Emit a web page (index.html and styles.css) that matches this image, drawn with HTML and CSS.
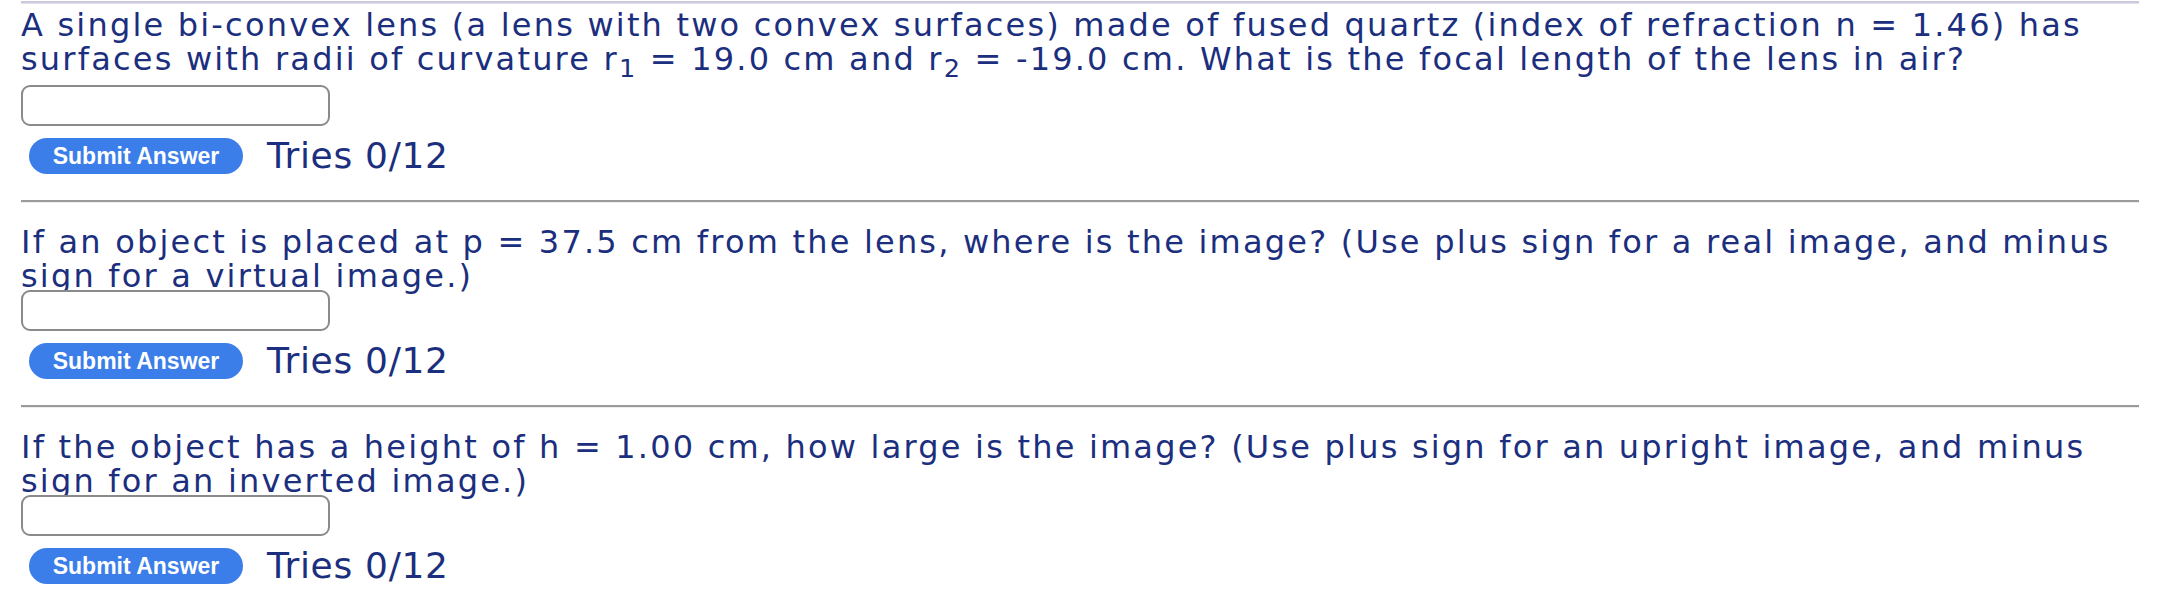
FILE: index.html
```html
<!DOCTYPE html>
<html lang="en">
<head>
<meta charset="utf-8">
<title>Lens questions</title>
<link rel="stylesheet" href="styles.css">
</head>
<body>
<main class="page">
  <section class="part part--first">
    <hr class="rule rule--top">
    <p class="question question--sub">A single bi-convex lens (a lens with two convex surfaces) made of fused quartz (index of refraction n = 1.46) has<br>surfaces with radii of curvature r<sub class="sub">1</sub> = 19.0 cm and r<sub class="sub">2</sub> = -19.0 cm. What is the focal length of the lens in air?</p>
    <input class="answer" type="text" aria-label="Answer">
    <div class="submit-row">
      <button class="submit" type="button">Submit Answer</button>
      <span class="tries">Tries 0/12</span>
    </div>
  </section>
  <section class="part">
    <hr class="rule">
    <p class="question">If an object is placed at p = 37.5 cm from the lens, where is the image? (Use plus sign for a real image, and minus<br>sign for a virtual image.)</p>
    <input class="answer" type="text" aria-label="Answer">
    <div class="submit-row">
      <button class="submit" type="button">Submit Answer</button>
      <span class="tries">Tries 0/12</span>
    </div>
  </section>
  <section class="part">
    <hr class="rule">
    <p class="question">If the object has a height of h = 1.00 cm, how large is the image? (Use plus sign for an upright image, and minus<br>sign for an inverted image.)</p>
    <input class="answer" type="text" aria-label="Answer">
    <div class="submit-row">
      <button class="submit" type="button">Submit Answer</button>
      <span class="tries">Tries 0/12</span>
    </div>
  </section>
</main>
</body>
</html>
```

FILE: styles.css
```css
html, body {
  margin: 0;
  padding: 0;
  background: #ffffff;
}

.page {
  padding: 0 21px;
  font-family: "DejaVu Sans", Verdana, sans-serif;
  color: #1b2f7e;
}

.part {
  display: flex;
  flex-direction: column;
  align-items: flex-start;
  margin-top: 26px;
}

.part--first {
  margin-top: 1px;
}

.rule {
  align-self: stretch;
  height: 0;
  margin: 0;
  border: 0;
  border-top: 2px solid #9b9b9b;
  border-bottom: 1px solid #ececec;
}

.rule--top {
  border-top: 2px solid #cacadc;
  border-bottom: 1px solid #e2e2ec;
}

.question {
  margin: 22px 0 0;
  font-size: 32px;
  line-height: 34px;
  letter-spacing: 2.2px;
  white-space: nowrap;
}

.part--first .question {
  margin-top: 4px;
}

.question--sub {
  padding-bottom: 3px;
}

.sub {
  font-size: 0.8em;
  vertical-align: sub;
  line-height: 34px;
}

.answer {
  box-sizing: border-box;
  width: 309px;
  height: 41px;
  margin: -3px 0 0;
  padding: 0 8px;
  border: 2px solid #8a8a8a;
  border-radius: 9px;
  background: #ffffff;
  font-size: 24px;
}

.submit-row {
  display: flex;
  align-items: center;
  margin-top: 12px;
  padding-left: 8px;
}

.submit {
  box-sizing: border-box;
  width: 214px;
  height: 36px;
  padding: 0;
  border: 0;
  border-radius: 18px;
  background: #3b7de9;
  color: #ffffff;
  font-family: "Liberation Sans", Arial, sans-serif;
  font-weight: bold;
  font-size: 23px;
}

.tries {
  margin-left: 24px;
  font-size: 36px;
  line-height: 36px;
  letter-spacing: 0.7px;
}
```
